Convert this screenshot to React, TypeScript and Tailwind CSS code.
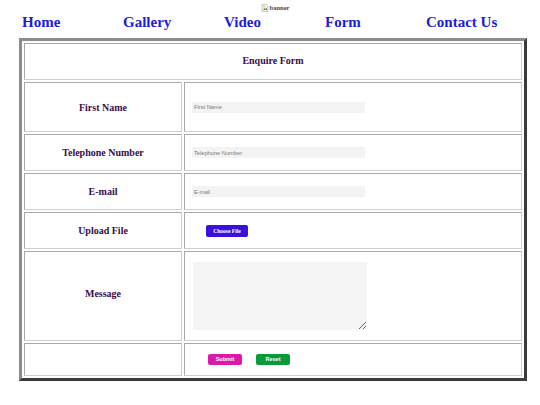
import React from "react";

const serif = { fontFamily: '"Liberation Serif", "Times New Roman", serif' };
const sans = { fontFamily: '"Liberation Sans", Arial, sans-serif' };

function BrokenImg() {
  return (
    <svg width="8" height="8" viewBox="0 0 16 16" className="shrink-0">
      <path d="M2 1h9l3 3v11H2z" fill="#f4f4f4" stroke="#9a9a9a" strokeWidth="1" />
      <path d="M4 12l3-4 2 2 2-3 2 5z" fill="#5b9b4a" />
      <circle cx="6" cy="5" r="1.3" fill="#d9a23a" />
    </svg>
  );
}

const navLinks = ["Home", "Gallery", "Video", "Form", "Contact Us"];

const cellCls =
  "border border-solid border-t-[#a9a9a9] border-l-[#a9a9a9] border-b-[#cfcfcf] border-r-[#cfcfcf] p-0";
const labelCls =
  "text-center align-middle font-bold text-[10px] text-[#3b0b4b] w-[158px]";

function Label({ children, extra = "" }: { children?: React.ReactNode; extra?: string }) {
  return (
    <td className={`${cellCls} ${labelCls} ${extra}`} style={serif}>
      {children}
    </td>
  );
}

function TextInput({ placeholder }: { placeholder: string }) {
  return (
    <input
      type="text"
      placeholder={placeholder}
      className="block w-[173px] h-[11px] bg-[#f3f3f3] border-0 outline-none px-[2px] text-[5.7px] text-[#333] placeholder:text-[#777]"
      style={sans}
    />
  );
}

export default function App() {
  return (
    <div className="w-[540px] h-[405px] bg-white overflow-hidden" style={serif}>
      <div className="h-[12px] flex justify-center items-start pt-[4px] pl-[10px]">
        <div className="flex items-start gap-[1px]">
          <BrokenImg />
          <span className="text-[6.5px] leading-[7px] font-bold text-[#4a4a4a]" style={serif}>
            banner
          </span>
        </div>
      </div>
      <nav className="h-[20px] flex items-center pl-[22px]">
        {navLinks.map((l) => (
          <a
            key={l}
            href="#"
            className="w-[101px] shrink-0 text-[15px] leading-[18px] font-bold text-[#1c1cd9] no-underline"
            style={serif}
          >
            {l}
          </a>
        ))}
      </nav>
      <div className="h-[6px]" />
      <table className="ml-[19px] w-[508px] border-separate border-spacing-[2px] border-[3px] border-solid border-t-[#8c8c8c] border-l-[#8c8c8c] border-b-[#3c3c3c] border-r-[#3c3c3c]">
        <tbody>
          <tr className="h-[37px]">
            <td
              colSpan={2}
              className={`${cellCls} text-center align-middle font-bold text-[10px] text-[#3b0b4b] pb-[2px]`}
              style={serif}
            >
              Enquire Form
            </td>
          </tr>
          <tr className="h-[50px]">
            <Label>First Name</Label>
            <td className={`${cellCls} align-middle pl-[7px]`}>
              <TextInput placeholder="First Name" />
            </td>
          </tr>
          <tr className="h-[37px]">
            <Label>Telephone Number</Label>
            <td className={`${cellCls} align-middle pl-[7px]`}>
              <TextInput placeholder="Telephone Number" />
            </td>
          </tr>
          <tr className="h-[37px]">
            <Label>E-mail</Label>
            <td className={`${cellCls} align-middle pl-[7px]`}>
              <TextInput placeholder="E-mail" />
            </td>
          </tr>
          <tr className="h-[37px]">
            <Label>Upload File</Label>
            <td className={`${cellCls} align-middle pl-[21px]`}>
              <button
                type="button"
                className="block w-[42px] h-[12px] rounded-[2px] bg-[#3a10dc] text-white font-bold text-[5.5px] leading-[12px] text-center"
                style={serif}
              >
                Choose File
              </button>
            </td>
          </tr>
          <tr className="h-[90px]">
            <Label extra="pb-[6px]">Message</Label>
            <td className={`${cellCls} align-middle pl-[8px]`}>
              <textarea
                className="block w-[174px] h-[68px] bg-[#f5f5f5] border-0 outline-none text-[6px]"
                style={sans}
              />
            </td>
          </tr>
          <tr className="h-[33px]">
            <Label />
            <td className={`${cellCls} align-middle pl-[23px]`}>
              <div className="flex items-center gap-[14px]">
                <button
                  type="button"
                  className="w-[34px] h-[11px] rounded-[2px] bg-[#dc1aa9] text-white font-bold text-[5.5px] leading-[11px] text-center"
                  style={sans}
                >
                  Submit
                </button>
                <button
                  type="button"
                  className="w-[34px] h-[11px] rounded-[2px] bg-[#0b9a3b] text-white font-bold text-[5.5px] leading-[11px] text-center"
                  style={sans}
                >
                  Reset
                </button>
              </div>
            </td>
          </tr>
        </tbody>
      </table>
    </div>
  );
}
